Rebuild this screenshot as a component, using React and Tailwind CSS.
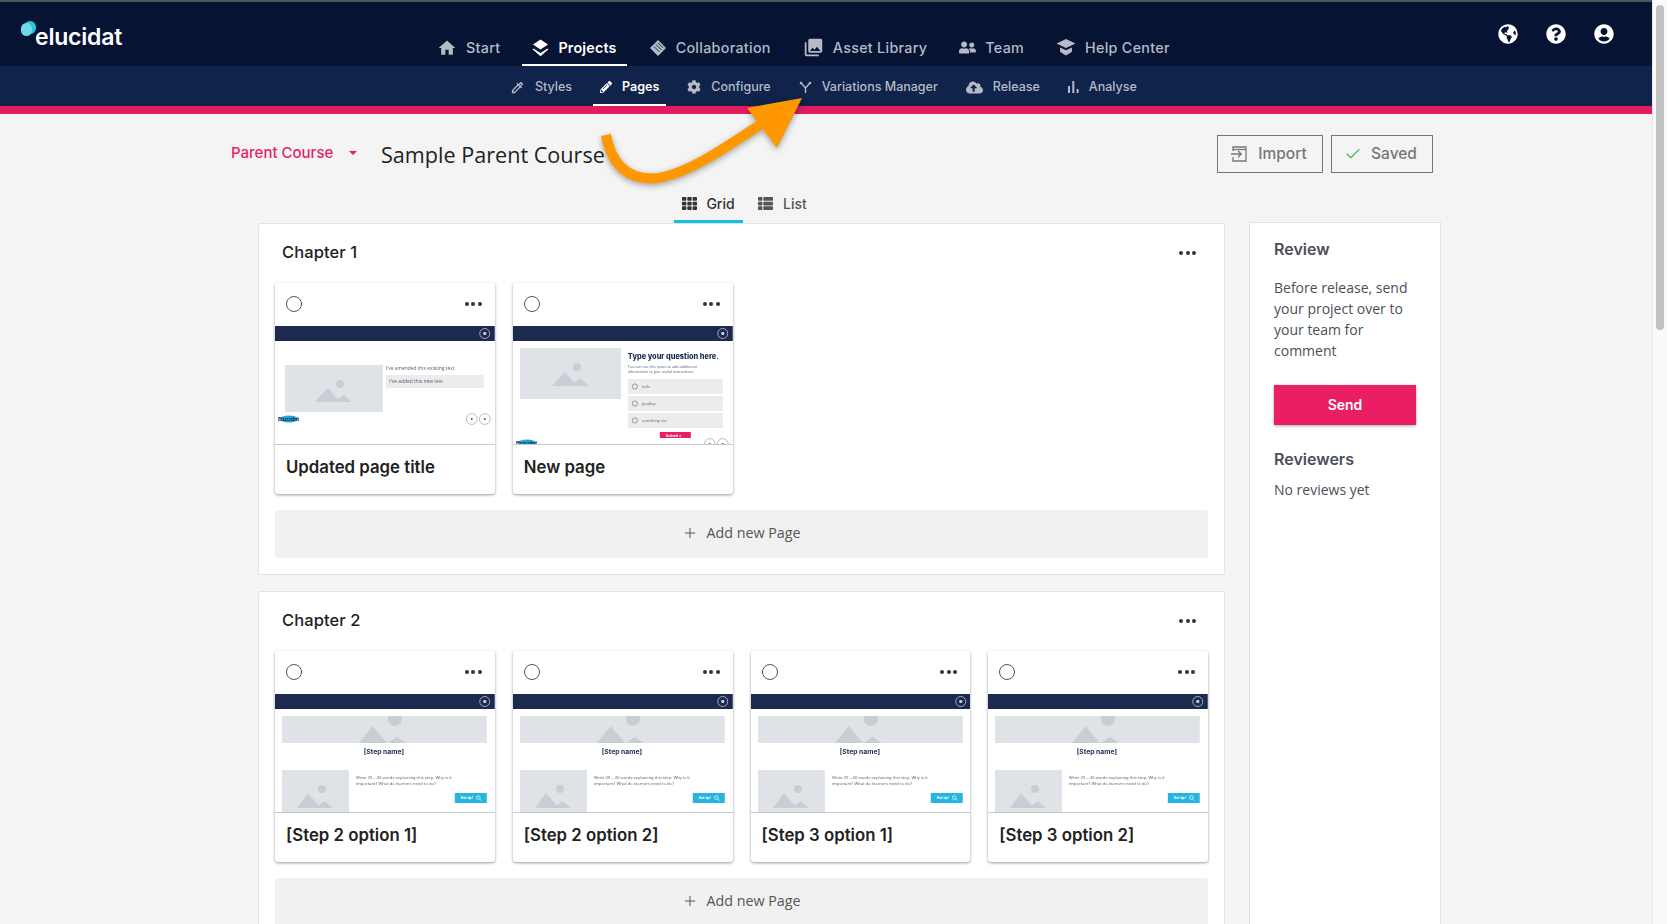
import { Check, Plus } from "lucide-react";
import {
  FaUserFriends,
  FaPencilAlt,
  FaCog,
  FaCloudUploadAlt,
  FaGlobeAmericas,
  FaQuestionCircle,
  FaUserCircle,
  FaTh,
  FaThList,
} from "react-icons/fa";
import { MdHome, MdPhotoLibrary, MdOutlineColorize } from "react-icons/md";

const bodyFont = "font-['Open_Sans',sans-serif]";

const LayersIcon = () => (
  <svg width="17" height="18" viewBox="0 0 17 18" fill="currentColor">
    <polygon points="8.5,0.5 16,5.5 8.5,10.5 1,5.5" />
    <path d="M1.5 9.5 8.5 14l7-4.5 1 .8-8 7-8-7z" />
  </svg>
);

const CollabIcon = () => (
  <svg width="18" height="18" viewBox="0 0 18 18">
    <polygon points="9,1 17,9 9,17 1,9" fill="currentColor" />
    <path d="M5 7.5 10.5 13M7 5.5l5.5 5.5M9 3.8l5 5" stroke="#061333" strokeWidth="0.9" fill="none" />
  </svg>
);

const CapIcon = () => (
  <svg width="20" height="19" viewBox="0 0 20 19" fill="currentColor">
    <polygon points="10,1 19.5,5.5 10,10 0.5,5.5" />
    <path d="M4 9.5v3.5c0 1.5 3 2.5 6 4.5 3-2 6-3 6-4.5V9.5L10 12.3z" />
  </svg>
);

const VariationsIcon = () => (
  <svg width="13" height="13" viewBox="0 0 13 13" fill="none" stroke="currentColor" strokeWidth="1.4">
    <path d="M6.5 12V7L2.5 2.5M6.5 7l4-4.5" />
    <circle cx="2" cy="2" r="1.3" fill="currentColor" stroke="none" />
    <circle cx="11" cy="2" r="1.3" fill="currentColor" stroke="none" />
  </svg>
);

const BarsIcon = () => (
  <svg width="11" height="12" viewBox="0 0 11 12" fill="currentColor">
    <rect x="0" y="5" width="2" height="7" />
    <rect x="4.3" y="0" width="2" height="12" />
    <rect x="8.6" y="8" width="2" height="4" />
  </svg>
);

const ImportIcon = () => (
  <svg width="18" height="18" viewBox="0 0 18 18" fill="none" stroke="currentColor" strokeWidth="1.3">
    <path d="M3 6V2h13v14H3v-4" />
    <path d="M3 4.5h13" />
    <path d="M1 9h10M8 5.8 11.2 9 8 12.2" />
  </svg>
);

const mainNav = [
  { label: "Start", icon: <MdHome size={20} /> },
  { label: "Projects", icon: <LayersIcon />, active: true },
  { label: "Collaboration", icon: <CollabIcon /> },
  { label: "Asset Library", icon: <MdPhotoLibrary size={21} /> },
  { label: "Team", icon: <FaUserFriends size={17} /> },
  { label: "Help Center", icon: <CapIcon /> },
];

const subNav = [
  { label: "Styles", icon: <MdOutlineColorize size={15} /> },
  { label: "Pages", icon: <FaPencilAlt size={12} />, active: true },
  { label: "Configure", icon: <FaCog size={14} /> },
  { label: "Variations Manager", icon: <VariationsIcon /> },
  { label: "Release", icon: <FaCloudUploadAlt size={17} /> },
  { label: "Analyse", icon: <BarsIcon /> },
];

function Placeholder({ x, y, w, h, sun, big, small }) {
  return (
    <g>
      <rect x={x} y={y} width={w} height={h} fill="#dfe2e7" />
      <clipPath id={`clip-${x}-${y}-${w}`}>
        <rect x={x} y={y} width={w} height={h} />
      </clipPath>
      <g clipPath={`url(#clip-${x}-${y}-${w})`} fill="#c9ced5">
        <circle cx={sun[0]} cy={sun[1]} r={sun[2]} />
        <polygon points={big} />
        <polygon points={small} />
      </g>
    </g>
  );
}

function TopBand() {
  return (
    <g>
      <rect width="220" height="15" fill="#1c2a50" />
      <circle cx="210" cy="7.5" r="5" fill="none" stroke="#c4c8d2" strokeWidth="0.8" />
      <rect x="208.4" y="5.9" width="3.2" height="3.2" rx="1" fill="#c4c8d2" />
    </g>
  );
}

function MiniLogo({ y }) {
  return (
    <g>
      <ellipse cx="14" cy={y} rx="9" ry="3.4" fill="#27a9d8" />
      <text x="3" y={y + 1.8} fontSize="5.4" fontWeight="700" fill="#1c2a50">
        Elucidat
      </text>
    </g>
  );
}

function NavDots({ y }) {
  return (
    <g fill="#fff" stroke="#9ca1ad" strokeWidth="0.7">
      <circle cx="197" cy={y} r="5.4" />
      <circle cx="210" cy={y} r="5.4" />
      <circle cx="197" cy={y} r="1" fill="#555" stroke="none" />
      <circle cx="210" cy={y} r="1" fill="#555" stroke="none" />
    </g>
  );
}

function ThumbText() {
  return (
    <>
      <TopBand />
      <Placeholder
        x={10}
        y={39}
        w={98}
        h={47}
        sun={[65, 58, 4]}
        big="40,76 53,62 65,76"
        small="58,76 69,69 77,76"
      />
      <text x="111" y="44.5" fontSize="4.9" fill="#555c70" className={bodyFont}>
        I've amended this existing text
      </text>
      <rect x="111" y="49" width="98" height="13" fill="#ececec" />
      <text x="114.5" y="56.8" fontSize="4.9" fill="#555c70" className={bodyFont}>
        I've added this new text
      </text>
      <MiniLogo y={93} />
      <NavDots y={93} />
    </>
  );
}

function ThumbQuestion() {
  const options = [
    { y: 53, label: "hello" },
    { y: 70, label: "goodbye" },
    { y: 87, label: "something else" },
  ];
  return (
    <>
      <TopBand />
      <Placeholder
        x={7}
        y={22}
        w={101}
        h={51}
        sun={[64, 41, 4]}
        big="39,60 52,46 64,60"
        small="58,60 67,52 76,60"
      />
      <text x="115" y="33.5" fontSize="7.4" fontWeight="800" fill="#1c2a50">
        Type your question here.
      </text>
      <text x="115" y="42" fontSize="3.7" fill="#555c70" className={bodyFont}>
        You can use this space to add additional
      </text>
      <text x="115" y="47.5" fontSize="3.7" fill="#555c70" className={bodyFont}>
        information or give useful instructions.
      </text>
      {options.map((o) => (
        <g key={o.label}>
          <rect x="115" y={o.y} width="95" height="15" fill="#ececec" />
          <circle cx="122" cy={o.y + 7.5} r="2.6" fill="none" stroke="#5b6275" strokeWidth="0.6" />
          <text x="129" y={o.y + 8.8} fontSize="3.6" fill="#555c70" className={bodyFont}>
            {o.label}
          </text>
        </g>
      ))}
      <rect x="147" y="106" width="31" height="6" fill="#e91e63" />
      <text x="153" y="111" fontSize="3.6" fontWeight="700" fill="#fff">
        Submit &gt;
      </text>
      <MiniLogo y={117} />
      <NavDots y={118} />
    </>
  );
}

function ThumbStep() {
  return (
    <>
      <TopBand />
      <Placeholder
        x={7}
        y={22}
        w={205}
        h={27}
        sun={[120, 25, 7]}
        big="84,49 98,32 112,49"
        small="113,49 122,43 131,49"
      />
      <text x="109" y="60" fontSize="6.8" fontWeight="700" textAnchor="middle" fill="#1c2a50">
        [Step name]
      </text>
      <Placeholder
        x={7}
        y={76}
        w={67}
        h={42}
        sun={[47, 95, 4]}
        big="22,114 33,99 46,114"
        small="40,114 50,107 58,114"
      />
      <text x="81" y="84.8" fontSize="4.2" fill="#555c70" className={bodyFont}>
        Write 20 – 40 words explaining this step. Why is it
      </text>
      <text x="81" y="91.3" fontSize="4.2" fill="#555c70" className={bodyFont}>
        important? What do learners need to do?
      </text>
      <rect x="180" y="99" width="32" height="10" fill="#25b5df" />
      <text x="186" y="105.3" fontSize="3.4" fontWeight="700" fill="#fff">
        Hot tip!
      </text>
      <circle cx="203.5" cy="103.5" r="1.8" fill="none" stroke="#fff" strokeWidth="0.7" />
      <path d="M205 105l1.7 1.7" stroke="#fff" strokeWidth="0.7" />
    </>
  );
}

function Dots() {
  return (
    <div className="flex gap-[2.5px]">
      <span className="w-[4px] h-[4px] rounded-full bg-[#333]" />
      <span className="w-[4px] h-[4px] rounded-full bg-[#333]" />
      <span className="w-[4px] h-[4px] rounded-full bg-[#333]" />
    </div>
  );
}

function PageCard({ title, thumb }) {
  return (
    <div className="bg-white rounded-[3px] shadow-[0_1px_3px_rgba(0,0,0,0.4)]">
      <div className="h-[43px] pb-[2px] flex items-center justify-between pl-[11px] pr-[13px]">
        <span className="w-[16px] h-[16px] rounded-full border-[1.5px] border-[#555]" />
        <Dots />
      </div>
      <div className="h-[119px] border-b border-[#c9c9c9] overflow-hidden">
        <svg
          width="100%"
          height="118"
          viewBox="0 0 220 118"
          preserveAspectRatio="none"
          className="block blur-[0.3px] font-['Inter',sans-serif]"
        >
          {thumb}
        </svg>
      </div>
      <div className="h-[49px] flex items-center pl-[11px] pb-[3px] text-[16.8px] font-semibold text-[#222]">
        {title}
      </div>
    </div>
  );
}

function Chapter({ title, cards }) {
  return (
    <section className="bg-white border border-[#e3e3e3] rounded-[2px] px-[16px] pb-[16px]">
      <div className="h-[59px] flex items-center justify-between pl-[7px] pr-[12px] pb-[3px]">
        <h2 className="text-[16.5px] font-medium text-[#222] tracking-[0.1px]">{title}</h2>
        <div className="mt-[2px]">
          <Dots />
        </div>
      </div>
      <div className="grid grid-cols-4 gap-[18px]">
        {cards.map((c) => (
          <PageCard key={c.title} title={c.title} thumb={c.thumb} />
        ))}
      </div>
      <div className="mt-[16px] h-[48px] pb-[2px] bg-[#f1f1f1] rounded-[3px] flex items-center justify-center gap-[8px] text-[#555] text-[14.3px] font-['Open_Sans',sans-serif]">
        <Plus size={16} strokeWidth={1.5} />
        Add new Page
      </div>
    </section>
  );
}

export default function App() {
  return (
    <div className="relative h-[924px] flex overflow-hidden bg-[#f4f4f4] font-['Inter',sans-serif]">
      <div className="flex-1 min-w-0">
        <header className="h-[66px] bg-[#061333] border-t-2 border-[#4b5560] flex">
          <div className="w-[427px] relative">
            <div className="flex items-center pl-[35px] pt-[19px] text-white text-[23px] font-semibold leading-[32px] tracking-[-0.2px]">
              elucidat
            </div>
            <span className="absolute left-[24px] top-[19px] w-[12px] h-[13px] rounded-full bg-[#2fc3d9]" />
            <span className="absolute left-[21px] top-[21px] w-[11px] h-[13px] rounded-full bg-[#6fdbe8]" />
          </div>
          <nav className="flex items-end gap-[12px]">
            {mainNav.map((item) => (
              <div
                key={item.label}
                className={
                  item.active
                    ? "h-[35px] px-[10px] flex items-center gap-[9px] border-b-2 border-white text-white text-[14.3px] tracking-[0.2px] font-semibold"
                    : "h-[35px] px-[10px] flex items-center gap-[9px] border-b-2 border-transparent text-[#b5bac6] text-[14.3px] tracking-[0.3px] font-medium"
                }
              >
                {item.icon}
                {item.label}
              </div>
            ))}
          </nav>
          <div className="ml-auto flex items-start gap-[28px] pt-[22px] pr-[38px] text-white">
            <FaGlobeAmericas size={20} />
            <FaQuestionCircle size={20} />
            <FaUserCircle size={20} />
          </div>
        </header>

        <div className="h-[48px] bg-[#0f234b] border-b-[8px] border-[#e31c60] flex pl-[503px] gap-[14px]">
          {subNav.map((item) => (
            <div
              key={item.label}
              className={
                item.active
                  ? "h-[40px] px-[7px] pt-[4px] flex items-center gap-[10px] border-b-2 border-white text-white text-[12.5px] font-semibold"
                  : "h-[40px] px-[7px] pt-[4px] flex items-center gap-[10px] border-b-2 border-transparent text-[#b5bac6] text-[12.5px] font-medium"
              }
            >
              {item.icon}
              {item.label}
            </div>
          ))}
        </div>

        <main className="pl-[231px]">
          <div className="w-[1202px] pt-[21px] flex items-center">
            <div className="w-[150px] pb-[2px] flex items-center text-[#e61e64] text-[15px] font-medium">
              Parent Course
              <span className="ml-[16px] w-0 h-0 border-x-[4px] border-x-transparent border-t-[4px] border-t-[#e61e64]" />
            </div>
            <h1 className="pt-[2px] text-[21.6px] text-[#222] font-['Open_Sans',sans-serif]">Sample Parent Course</h1>
            <div className="ml-auto flex gap-[8px] text-[15.5px] font-medium text-[#777]">
              <div className="h-[38px] w-[106px] border border-[#777] flex items-center justify-center gap-[10px] pr-[3px]">
                <ImportIcon />
                Import
              </div>
              <div className="h-[38px] w-[102px] border border-[#777] flex items-center justify-center gap-[9px] pr-[3px]">
                <Check size={18} strokeWidth={1.5} className="text-[#3cc04f]" />
                Saved
              </div>
            </div>
          </div>

          <div className="h-[50px] pl-[443px] flex items-end gap-[4px] text-[14px] font-medium">
            <div className="h-[36px] w-[69px] flex items-center justify-center gap-[9px] border-b-[3px] border-[#13bfe0] text-[#333]">
              <FaTh size={15} />
              Grid
            </div>
            <div className="h-[36px] px-[11px] flex items-center gap-[10px] border-b-[3px] border-transparent text-[#555]">
              <FaThList size={15} />
              List
            </div>
          </div>

          <div className="ml-[27px] flex gap-[24px]">
            <div className="w-[967px] flex flex-col gap-[16px] shrink-0">
              <Chapter
                title="Chapter 1"
                cards={[
                  { title: "Updated page title", thumb: <ThumbText /> },
                  { title: "New page", thumb: <ThumbQuestion /> },
                ]}
              />
              <Chapter
                title="Chapter 2"
                cards={[
                  { title: "[Step 2 option 1]", thumb: <ThumbStep /> },
                  { title: "[Step 2 option 2]", thumb: <ThumbStep /> },
                  { title: "[Step 3 option 1]", thumb: <ThumbStep /> },
                  { title: "[Step 3 option 2]", thumb: <ThumbStep /> },
                ]}
              />
            </div>
            <aside className="w-[192px] h-[720px] -mt-px bg-white border border-[#e3e3e3] px-[24px] pt-[14px] shrink-0 text-[#4b4f58]">
              <h3 className="text-[16px] font-semibold leading-[24px]">Review</h3>
              <p className="mt-[16px] text-[14px] leading-[21px] font-['Open_Sans',sans-serif]">
                Before release, send your project over to your team for comment
              </p>
              <button className="mt-[24px] w-[142px] h-[40px] pb-[2px] bg-[#e91e63] text-white text-[14px] font-semibold shadow-[0_1px_3px_rgba(0,0,0,0.35)]">
                Send
              </button>
              <h3 className="mt-[22px] text-[16px] font-semibold leading-[24px]">Reviewers</h3>
              <p className="mt-[8px] text-[14px] leading-[21px] font-['Open_Sans',sans-serif]">No reviews yet</p>
            </aside>
          </div>
        </main>
      </div>

      <div className="w-[15px] shrink-0 bg-[#fafafa] border-l border-[#e6e6e6] pt-[5px] pl-[3px]">
        <div className="w-[8px] h-[325px] rounded-full bg-[#c1c1c1]" />
      </div>

      <svg
        className="absolute left-[590px] top-[90px] drop-shadow-[0_2px_3px_rgba(0,0,0,0.35)]"
        width="230"
        height="110"
        viewBox="590 90 230 110"
      >
        <path
          d="M606 135C612 167 630 181 658 178C688 173 722 150 764 122"
          fill="none"
          stroke="#ff9800"
          strokeWidth="10"
        />
        <polygon points="802,98 747,108 777,148" fill="#ff9800" />
      </svg>
    </div>
  );
}
